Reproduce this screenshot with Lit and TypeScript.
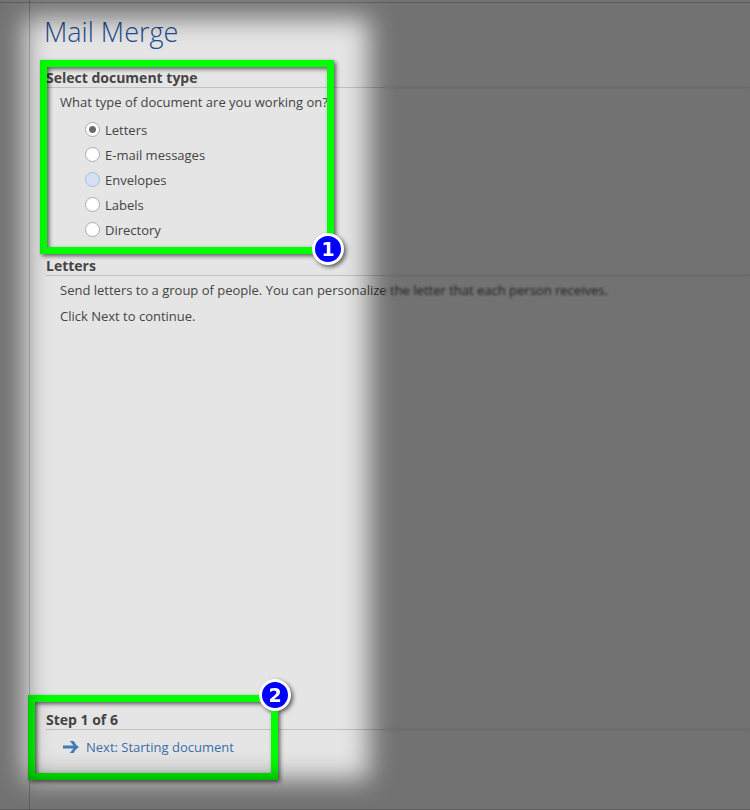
import { LitElement, html, css } from "lit";
import { customElement, state } from "lit/decorators.js";

const TYPES = ["Letters", "E-mail messages", "Envelopes", "Labels", "Directory"];

@customElement("app-root")
export class AppRoot extends LitElement {
  @state() private selected = "Letters";

  static styles = css`
    :host {
      display: block;
      position: relative;
      overflow: hidden;
      background: #e5e5e5;
      color: #444;
      font: 13px/20px "Open Sans", "Noto Sans", sans-serif;
    }
    * {
      box-sizing: border-box;
    }
    .pane {
      display: flex;
      flex-direction: column;
      min-height: 100vh;
      margin-left: 29px;
      padding: 12px 0 24px 16px;
      border-left: 1px solid #b8b8b8;
    }
    h1 {
      margin: 0 0 16px -2px;
      color: #1f4e8f;
      font-size: 27px;
      line-height: 40px;
      font-weight: 300;
    }
    section {
      position: relative;
    }
    h2 {
      margin: 0;
      border-bottom: 1px solid #c0c0c0;
      font-size: 14px;
      line-height: 19px;
      font-weight: 700;
    }
    p,
    legend {
      margin: 0;
      padding: 0 0 0 14px;
    }
    fieldset {
      margin: 0 0 14px;
      padding: 5px 0 0;
      border: 0;
    }
    legend {
      padding-top: 4px;
    }
    .option {
      display: flex;
      align-items: center;
      gap: 5px;
      width: max-content;
      height: 25px;
      margin-left: 39px;
    }
    .option input {
      appearance: none;
      width: 15px;
      height: 15px;
      margin: 0;
      border: 1px solid #ababab;
      border-radius: 50%;
      background: #fff;
    }
    .option input:checked {
      background: radial-gradient(circle, #6a6a6a 3px, #fff 4px);
    }
    .option .hot {
      border-color: #a3bde3;
      background: #d5e1f2;
    }
    .info p {
      padding-top: 4px;
      margin-bottom: 2px;
    }
    .step {
      margin-top: auto;
      padding-bottom: 28px;
    }
    .next {
      display: inline-flex;
      align-items: center;
      gap: 7px;
      margin: 7px 0 0 17px;
      color: #3a6ea5;
      text-decoration: none;
    }
    .frame {
      position: absolute;
      border: 7px solid #0f0;
      filter: drop-shadow(2px 2px 2px rgba(0, 0, 0, 0.6));
      pointer-events: none;
    }
    .frame.types {
      left: -6px;
      top: -8px;
      width: 294px;
      height: 194px;
    }
    .frame.steps {
      left: -18px;
      top: -15px;
      width: 250px;
      height: 85px;
    }
    .badge {
      position: absolute;
      width: 32px;
      height: 32px;
      border: 3px solid #fff;
      border-radius: 50%;
      background: #00f;
      color: #fff;
      font: bold 19px/26px "DejaVu Sans", sans-serif;
      text-align: center;
    }
    .types .badge {
      bottom: -18px;
      right: -17px;
    }
    .steps .badge {
      top: -23px;
      right: -20px;
    }
    .soften {
      position: absolute;
      inset: 0 0 0 384px;
      backdrop-filter: blur(1px);
      pointer-events: none;
    }
    .spotlight {
      position: absolute;
      left: 25px;
      top: 18px;
      bottom: 31px;
      width: 344px;
      outline: 1600px solid rgba(0, 0, 0, 0.5);
      filter: blur(13px);
      pointer-events: none;
    }
    .edges {
      position: absolute;
      inset: 2px 0 0;
      border: solid rgba(0, 0, 0, 0.2);
      border-width: 1px 0;
      pointer-events: none;
    }
  `;

  render() {
    return html`
      <main class="pane">
        <h1>Mail Merge</h1>
        <section>
          <h2>Select document type</h2>
          <fieldset>
            <legend>What type of document are you working on?</legend>
            ${TYPES.map(
              (t) => html`<label class="option">
                <input
                  type="radio"
                  name="type"
                  class=${t === "Envelopes" ? "hot" : ""}
                  .checked=${t === this.selected}
                  @change=${() => (this.selected = t)}
                />${t}</label
              >`
            )}
          </fieldset>
          <div class="frame types"><span class="badge">1</span></div>
        </section>
        <section class="info">
          <h2>Letters</h2>
          <p>Send letters to a group of people. You can personalize the letter that each person receives.</p>
          <p>Click Next to continue.</p>
        </section>
        <section class="step">
          <h2>Step 1 of 6</h2>
          <a class="next" href="#next">
            <svg width="16" height="12" viewBox="0 0 16 12" aria-hidden="true">
              <path d="M0 4.6h10.5L6.8 0h3.9q1.8 4 5.3 6-3.5 2-5.3 6H6.8l3.7-4.6H0z" fill="#3f7ab5" />
            </svg>
            Next: Starting document
          </a>
          <div class="frame steps"><span class="badge">2</span></div>
        </section>
      </main>
      <div class="soften"></div>
      <div class="spotlight"></div>
      <div class="edges"></div>
    `;
  }
}
